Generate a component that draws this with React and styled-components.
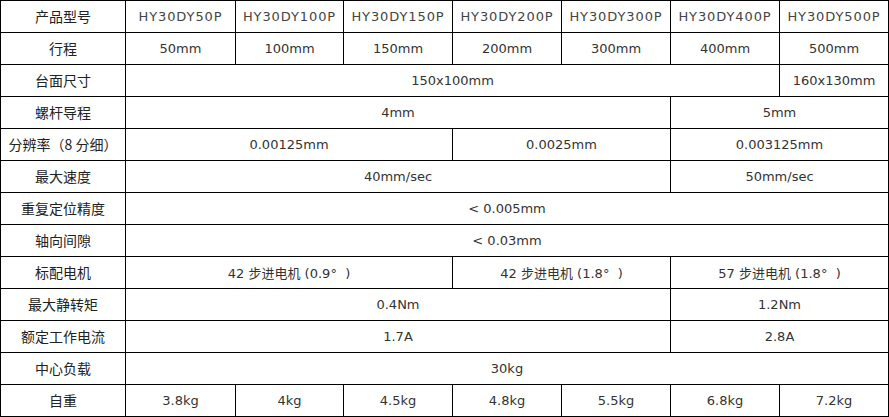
import React from 'react';
import styled, { createGlobalStyle } from 'styled-components';

const GlobalStyle = createGlobalStyle`
  html, body {
    margin: 0;
    padding: 0;
    background: #fff;
  }
`

const Table = styled.div`
  display: grid;
  grid-template-columns: 125px 110px 108px 109px 109px 109px 109px 109px;
  grid-auto-rows: 32px;
  width: 889px;
  box-sizing: border-box;
  border-left: 1px solid #000;
  border-top: 1px solid #000;
  font-family: "DejaVu Sans", "Noto Sans CJK SC", sans-serif;
  font-size: 13px;
  color: #333;
`

const Cell = styled.div`
  grid-column: span ${p => p.span || 1};
  display: flex;
  align-items: center;
  justify-content: center;
  box-sizing: border-box;
  border-right: 1px solid #000;
  border-bottom: 1px solid #000;
  white-space: pre;
  padding-bottom: 1px;
`

const HeadCell = styled(Cell)`
  color: #444;
  letter-spacing: 0.9px;
`

const Label = styled(Cell)`
  font-family: "Noto Sans CJK SC", sans-serif;
  font-size: 14px;
  color: #222;
`

const Cjk = styled.span`
  font-family: "Noto Sans CJK SC", sans-serif;
  font-size: 13px;
`

const Motor = ({ size, angle }) => (
  <span>{size} <Cjk>步进电机</Cjk> ({angle}°  )</span>
)

const models = ['HY30DY50P', 'HY30DY100P', 'HY30DY150P', 'HY30DY200P', 'HY30DY300P', 'HY30DY400P', 'HY30DY500P']

const rows = [
  ['行程', [['50mm'], ['100mm'], ['150mm'], ['200mm'], ['300mm'], ['400mm'], ['500mm']]],
  ['台面尺寸', [['150x100mm', 6], ['160x130mm']]],
  ['螺杆导程', [['4mm', 5], ['5mm', 2]]],
  ['分辨率（8 分细）', [['0.00125mm', 3], ['0.0025mm', 2], ['0.003125mm', 2]]],
  ['最大速度', [['40mm/sec', 5], ['50mm/sec', 2]]],
  ['重复定位精度', [['< 0.005mm', 7]]],
  ['轴向间隙', [['< 0.03mm', 7]]],
  ['标配电机', [[<Motor size="42" angle="0.9" />, 3], [<Motor size="42" angle="1.8" />, 2], [<Motor size="57" angle="1.8" />, 2]]],
  ['最大静转矩', [['0.4Nm', 5], ['1.2Nm', 2]]],
  ['额定工作电流', [['1.7A', 5], ['2.8A', 2]]],
  ['中心负载', [['30kg', 7]]],
  ['自重', [['3.8kg'], ['4kg'], ['4.5kg'], ['4.8kg'], ['5.5kg'], ['6.8kg'], ['7.2kg']]],
]

export default function App() {
  return (
    <>
      <GlobalStyle />
      <Table>
        <Label>产品型号</Label>
        {models.map(m => <HeadCell key={m}>{m}</HeadCell>)}
        {rows.map(([label, cells], i) => (
          <React.Fragment key={i}>
            <Label>{label}</Label>
            {cells.map(([value, span], j) => (
              <Cell key={j} span={span}>{value}</Cell>
            ))}
          </React.Fragment>
        ))}
      </Table>
    </>
  )
}
